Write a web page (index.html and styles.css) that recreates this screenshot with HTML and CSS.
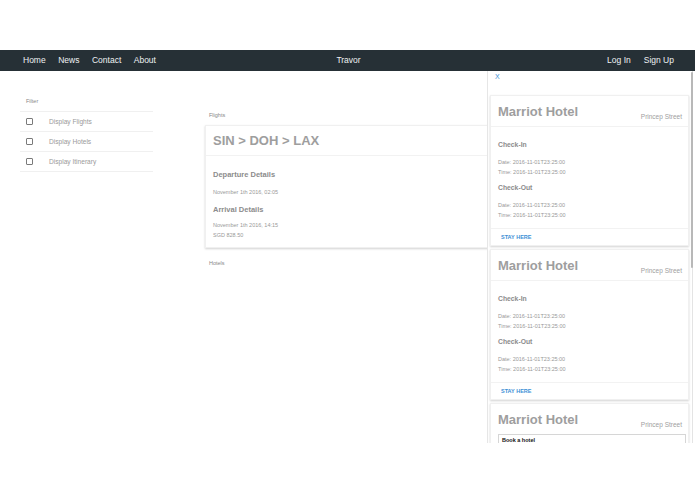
FILE: index.html
```html
<!DOCTYPE html>
<html>
<head>
<meta charset="utf-8">
<link rel="stylesheet" href="styles.css">
</head>
<body>
<div class="top-gap"></div>
<nav class="nav">
  <div class="nav-left"><a>Home</a><a>News</a><a>Contact</a><a>About</a></div>
  <div class="brand">Travor</div>
  <div class="nav-right"><a>Log In</a><a>Sign Up</a></div>
</nav>
<main class="main">
  <aside class="filter">
    <div class="small-label">Filter</div>
    <ul class="filter-list">
      <li><span class="box"></span><span>Display Flights</span></li>
      <li><span class="box"></span><span>Display Hotels</span></li>
      <li><span class="box"></span><span>Display Itinerary</span></li>
    </ul>
  </aside>
  <section class="content">
    <div class="small-label">Flights</div>
    <div class="flight-card">
      <div class="flight-head">SIN &gt; DOH &gt; LAX</div>
      <div class="flight-body">
        <div class="sub dep">Departure Details</div>
        <div class="line l1">November 1th 2016, 02:05</div>
        <div class="sub arr">Arrival Details</div>
        <div class="line l2">November 1th 2016, 14:15</div>
        <div class="line">SGD 828.50</div>
      </div>
    </div>
    <div class="small-label hotels">Hotels</div>
  </section>
  <div class="drawer">
    <div class="close">X</div>
    <div class="hotel-card">
      <div class="hotel-head"><span class="hotel-name">Marriot Hotel</span><span class="street">Princep Street</span></div>
      <div class="hotel-body">
        <div class="hsub">Check-In</div>
        <div class="hline first">Date: 2016-11-01T23:25:00</div>
        <div class="hline">Time: 2016-11-01T23:25:00</div>
        <div class="hsub out">Check-Out</div>
        <div class="hline first">Date: 2016-11-01T23:25:00</div>
        <div class="hline">Time: 2016-11-01T23:25:00</div>
      </div>
      <div class="hotel-foot">STAY HERE</div>
    </div>
    <div class="hotel-card">
      <div class="hotel-head"><span class="hotel-name">Marriot Hotel</span><span class="street">Princep Street</span></div>
      <div class="hotel-body">
        <div class="hsub">Check-In</div>
        <div class="hline first">Date: 2016-11-01T23:25:00</div>
        <div class="hline">Time: 2016-11-01T23:25:00</div>
        <div class="hsub out">Check-Out</div>
        <div class="hline first">Date: 2016-11-01T23:25:00</div>
        <div class="hline">Time: 2016-11-01T23:25:00</div>
      </div>
      <div class="hotel-foot">STAY HERE</div>
    </div>
    <div class="hotel-card">
      <div class="hotel-head plain"><span class="hotel-name">Marriot Hotel</span><span class="street">Princep Street</span></div>
      <div class="book">Book a hotel</div>
    </div>
    <div class="scroll-thumb"></div>
  </div>
</main>
</body>
</html>
```

FILE: styles.css
```css
* { box-sizing: border-box; }
html, body { margin: 0; padding: 0; background: #fff; }
body { font-family: "Liberation Sans", Arial, Helvetica, sans-serif; color: #999; }

.top-gap { height: 50px; }

.nav {
  height: 21px;
  background: #263036;
  display: grid;
  grid-template-columns: 1fr auto 1fr;
  align-items: center;
  padding: 0 21px 2px 23px;
  font-size: 8.5px;
  color: #eef1f3;
}
.nav a { color: #eef1f3; }
.nav-left { display: flex; gap: 12.5px; }
.nav-right { display: flex; gap: 13px; justify-content: flex-end; }
.brand { text-align: center; }

.main {
  position: relative;
  height: 372px;
  overflow: hidden;
  display: flex;
  align-items: flex-start;
}

.small-label { font-size: 5.5px; line-height: 10px; color: #888; }

.filter { margin-left: 20px; width: 133px; padding-top: 25px; }
.filter .small-label { padding-left: 6px; margin-bottom: 5px; }
.filter-list { list-style: none; margin: 0; padding: 0; }
.filter-list li {
  height: 20px;
  border-top: 1px solid #f0f0f0;
  display: flex;
  align-items: center;
  padding-left: 6px;
  font-size: 6.6px;
  color: #9a9a9a;
}
.filter-list li:last-child { border-bottom: 1px solid #f0f0f0; height: 21px; }
.box {
  width: 7px; height: 7px;
  border: 1px solid #7a7a7a;
  border-radius: 1px;
  margin-right: 16px;
}

.content { margin-left: 52px; width: 360px; padding-top: 39px; }
.content .small-label { padding-left: 4px; margin-bottom: 5px; }
.flight-card {
  background: #fff;
  border: 1px solid #f0f0f0;
  box-shadow: 0 1px 2px rgba(0,0,0,0.18);
}
.flight-head {
  height: 30px;
  line-height: 29px;
  border-bottom: 1px solid #f2f2f2;
  padding-left: 7px;
  font-size: 13px;
  font-weight: bold;
  color: #9e9e9e;
}
.flight-body { padding: 13px 7px 7px; }
.sub { font-size: 7.5px; font-weight: bold; line-height: 12px; color: #8c8c8c; }
.line { font-size: 5.5px; line-height: 10px; color: #999; }
.l1 { margin-top: 6px; }
.arr { margin-top: 7px; }
.l2 { margin-top: 4px; }
.content .hotels { margin-top: 10px; }

.drawer {
  position: absolute;
  top: 0; left: 487px; width: 208px; bottom: 0;
  background: #fff;
  border-left: 1px solid #e6e6e6;
  padding-left: 2px;
}
.drawer::after {
  content: "";
  position: absolute;
  top: 0; bottom: 0; right: 2px;
  width: 1px;
  background: #e4e4e4;
}
.scroll-thumb {
  position: absolute;
  top: 1px; right: 2px;
  width: 2px; height: 196px;
  background: #b8b8b8;
  border-radius: 1px;
  z-index: 2;
}
.close {
  font-size: 7px;
  line-height: 12px;
  color: #3d8fd6;
  padding-left: 5px;
  margin-bottom: 12px;
}
.hotel-card {
  width: 199px;
  background: #fff;
  border: 1px solid #f0f0f0;
  box-shadow: 0 1px 2px rgba(0,0,0,0.18);
  margin-bottom: 3px;
}
.hotel-head {
  height: 31px;
  display: flex;
  justify-content: space-between;
  align-items: center;
  padding: 0 6px 0 7px;
  border-bottom: 1px solid #f2f2f2;
}
.hotel-head.plain { border-bottom: none; height: 30px; }
.hotel-name { font-size: 13px; font-weight: bold; color: #9e9e9e; }
.street { font-size: 6.5px; color: #a0a0a0; margin-top: 10px; }
.hotel-body { padding: 12px 7px 8px; }
.hsub { font-size: 6.8px; font-weight: bold; line-height: 12px; color: #8c8c8c; }
.hsub.out { margin-top: 5px; }
.hline { font-size: 5.5px; line-height: 10px; color: #999; }
.hline.first { margin-top: 6px; }
.hotel-foot {
  height: 17px;
  line-height: 16px;
  border-top: 1px solid #f2f2f2;
  padding-left: 10px;
  font-size: 5.5px;
  font-weight: bold;
  color: #3d8fd6;
}
.book {
  margin: 0 2px 0 7px;
  border: 1px solid #d6d6d6;
  padding: 1px 3px;
  height: 20px;
  font-size: 5.5px;
  line-height: 8px;
  font-weight: bold;
  color: #111;
}
```
